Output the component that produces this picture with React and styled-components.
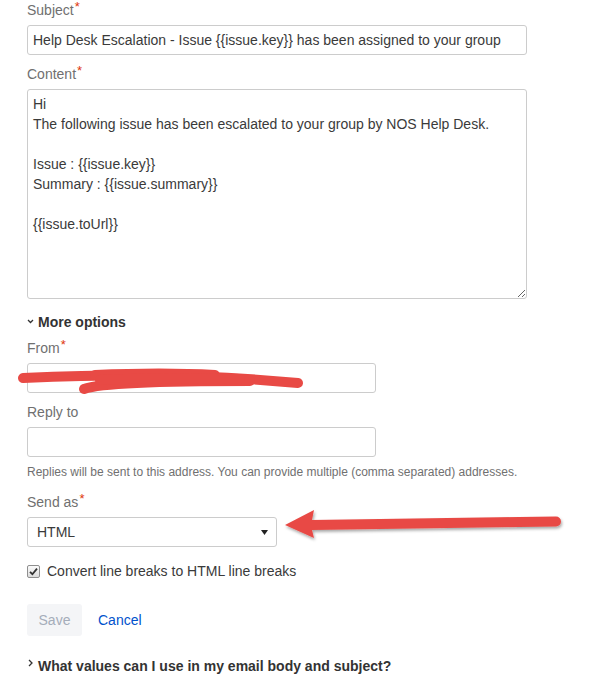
import React from "react";
import styled, { createGlobalStyle } from "styled-components";

const GlobalStyle = createGlobalStyle`
  body {
    margin: 0;
    background: #fff;
    font-family: "Liberation Sans", Arial, sans-serif;
    color: #333;
  }
`;

const Page = styled.div`
  position: relative;
  width: 613px;
  height: 700px;
  padding-left: 27px;
  box-sizing: border-box;
  overflow: hidden;
`;

const Field = styled.div`
  margin-top: ${(p) => p.$top || 0}px;
`;

const Label = styled.label`
  display: block;
  height: 20px;
  font-size: 14px;
  line-height: 20px;
  color: #707070;
  margin-bottom: 5px;
`;

const Req = styled.span`
  position: relative;
  top: -4px;
  margin-left: 1px;
  font-size: 13px;
  line-height: 1;
  color: #de350b;
`;

const TextInput = styled.input`
  display: block;
  box-sizing: border-box;
  width: ${(p) => p.$width}px;
  height: 30px;
  margin: 0;
  padding: 0 5px;
  border: 1px solid #ccc;
  border-radius: 3px;
  font-family: inherit;
  font-size: 14px;
  color: #3a3a3a;
  background: #fff;
  outline: none;
`;

const TextArea = styled.textarea`
  display: block;
  box-sizing: border-box;
  width: 500px;
  height: 210px;
  margin: 0;
  padding: 4px 5px;
  border: 1px solid #ccc;
  border-radius: 3px;
  font-family: inherit;
  font-size: 14px;
  line-height: 20px;
  color: #3a3a3a;
  outline: none;
  resize: both;
`;

const Toggle = styled.div`
  display: flex;
  align-items: center;
  height: 20px;
  margin-top: ${(p) => p.$top}px;
  font-size: 14px;
  line-height: 20px;
  font-weight: bold;
  color: #333;
`;

const Chevron = styled.svg`
  flex: none;
  margin-left: ${(p) => p.$left || 0}px;
  margin-right: ${(p) => p.$right}px;
  margin-top: ${(p) => p.$shift || 0}px;
`;

const Help = styled.div`
  height: 16px;
  margin-top: 7px;
  font-size: 12px;
  line-height: 16px;
  color: #707070;
`;

const SelectBox = styled.div`
  display: flex;
  align-items: center;
  justify-content: space-between;
  box-sizing: border-box;
  width: 250px;
  height: 30px;
  padding: 0 8px 0 9px;
  border: 1px solid #ccc;
  border-radius: 3px;
  font-size: 14px;
  color: #3a3a3a;
`;

const CheckRow = styled.label`
  display: flex;
  align-items: center;
  height: 20px;
  margin-top: 14px;
  font-size: 14px;
  line-height: 20px;
  color: #3a3a3a;
`;

const CheckBox = styled.span`
  display: flex;
  align-items: center;
  justify-content: center;
  box-sizing: border-box;
  width: 13px;
  height: 13px;
  margin-right: 7px;
  border: 1px solid #8f8f8f;
  border-radius: 2px;
  background: linear-gradient(#fbfbfb, #dcdcdc);
`;

const Actions = styled.div`
  display: flex;
  align-items: center;
  height: 32px;
  margin-top: 23px;
`;

const SaveButton = styled.button`
  width: 55px;
  height: 32px;
  margin: 0;
  border: none;
  border-radius: 3px;
  background: #f4f5f7;
  color: #a5adba;
  font-family: inherit;
  font-size: 14px;
`;

const LinkButton = styled.button`
  margin: 0 0 0 6px;
  padding: 0 10px;
  height: 32px;
  border: none;
  background: none;
  color: #0052cc;
  font-family: inherit;
  font-size: 14px;
`;

const Overlay = styled.svg`
  position: absolute;
  left: 0;
  top: 0;
  pointer-events: none;
`;

const content = `Hi
The following issue has been escalated to your group by NOS Help Desk.

Issue : {{issue.key}}
Summary : {{issue.summary}}

{{issue.toUrl}}`;

export default function App() {
  return (
    <>
      <GlobalStyle />
      <Page>
        <Field>
          <Label>
            Subject<Req>*</Req>
          </Label>
          <TextInput
            $width={500}
            readOnly
            defaultValue="Help Desk Escalation - Issue {{issue.key}} has been assigned to your group"
          />
        </Field>

        <Field $top={9}>
          <Label>
            Content<Req>*</Req>
          </Label>
          <TextArea readOnly defaultValue={content} />
        </Field>

        <Toggle $top={13}>
          <Chevron width="7" height="5" viewBox="0 0 7 5" $right={4} $shift={-2}>
            <path d="M1 1 L3.5 3.5 L6 1" fill="none" stroke="#333" strokeWidth="1.3" />
          </Chevron>
          More options
        </Toggle>

        <Field $top={6}>
          <Label>
            From<Req>*</Req>
          </Label>
          <TextInput $width={349} readOnly defaultValue="" />
        </Field>

        <Field $top={9}>
          <Label>Reply to</Label>
          <TextInput $width={349} readOnly defaultValue="" />
        </Field>

        <Help>
          Replies will be sent to this address. You can provide multiple (comma separated) addresses.
        </Help>

        <Field $top={12}>
          <Label>
            Send as<Req>*</Req>
          </Label>
          <SelectBox>
            HTML
            <svg width="7" height="5" viewBox="0 0 7 5">
              <path d="M0 0 H7 L3.5 5 Z" fill="#222" />
            </svg>
          </SelectBox>
        </Field>

        <CheckRow>
          <CheckBox>
            <svg width="9" height="9" viewBox="0 0 9 9">
              <path d="M1 4.8 L3.4 7.2 L8 1.6" fill="none" stroke="#333" strokeWidth="1.8" />
            </svg>
          </CheckBox>
          Convert line breaks to HTML line breaks
        </CheckRow>

        <Actions>
          <SaveButton>Save</SaveButton>
          <LinkButton>Cancel</LinkButton>
        </Actions>

        <Toggle $top={20}>
          <Chevron width="5" height="8" viewBox="0 0 5 8" $left={1} $right={5} $shift={-6}>
            <path d="M1 1 L4 4 L1 7" fill="none" stroke="#333" strokeWidth="1.3" />
          </Chevron>
          What values can I use in my email body and subject?
        </Toggle>

        <Overlay width="613" height="700" viewBox="0 0 613 700">
          <defs>
            <filter id="shadow" x="-10%" y="-50%" width="120%" height="200%">
              <feDropShadow dx="1" dy="2" stdDeviation="1.5" floodColor="#000" floodOpacity="0.35" />
            </filter>
          </defs>
          <g fill="none" stroke="#e84a45" strokeWidth="10" strokeLinecap="round">
            <path d="M23 378 C90 375 180 372 298 383" />
            <path d="M84 389 C100 383 150 381 250 381" />
            <path d="M95 375 C140 373 180 373 215 375" />
            <path d="M100 380 C140 378 190 378 240 379" />
          </g>
          <path
            filter="url(#shadow)"
            fill="#e84a45"
            d="M285 525 L314 510 L312 520 L556 516.5 A5 5 0 0 1 556 526.5 L312 530 L314 538 Z"
          />
        </Overlay>
      </Page>
    </>
  );
}
